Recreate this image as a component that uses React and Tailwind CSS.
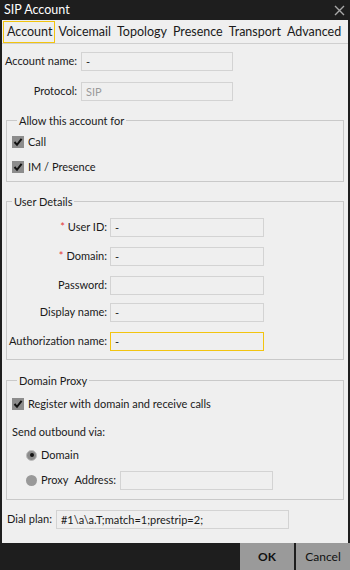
import React from "react";

const F = "font-['Lato',sans-serif]";

function Input({ value = "", w, muted, focused }) {
  return (
    <div
      className={`h-[19px] ${w} border ${focused ? "border-[#f2c40f]" : "border-[#d3d3d3]"} bg-[#efefef] flex items-center px-[4px] text-[11px] ${muted ? "text-[#9a9a9a]" : "text-[#1a1a1a]"} leading-none`}
    >
      {value}
    </div>
  );
}

function Check({ label }) {
  return (
    <div className="flex items-center h-[16px]">
      <div className="w-[12px] h-[12px] bg-[#8c8c8c] flex items-center justify-center">
        <svg width="10" height="10" viewBox="0 0 10 10">
          <path d="M1.5 5 L4 7.8 L8.6 1.8" fill="none" stroke="#111" strokeWidth="2" />
        </svg>
      </div>
      <span className="ml-[4px] text-[11px] text-[#1a1a1a]">{label}</span>
    </div>
  );
}

function Radio({ checked }) {
  return (
    <div className={`w-[11px] h-[11px] rounded-full flex items-center justify-center ${checked ? "bg-[#8c8c8c] border border-[#bdbdbd]" : "bg-[#999999]"}`}>
      {checked && <div className="w-[4px] h-[4px] rounded-full bg-[#111]" />}
    </div>
  );
}

function Row({ label, req, value, focused }) {
  return (
    <div className="flex items-center">
      <div className="w-[103px] text-right text-[11px] text-[#1a1a1a] pr-[3px]">
        {req && <span className="text-[#e53935] mr-[3px]">*</span>}
        {label}
      </div>
      <Input w="w-[154px]" value={value} focused={focused} />
    </div>
  );
}

function Tab({ children, active }) {
  return (
    <div className={`h-[22px] px-[2px] border ${active ? "border-[#f2c40f] pl-[3px]" : "border-transparent"} flex items-center`}>
      {children}
    </div>
  );
}

export default function App() {
  return (
    <div className={`${F} w-[350px] h-[570px] flex flex-col bg-[#1e1e1e] overflow-hidden`}>
      <div className="h-[20px] flex items-center justify-between pl-[4px] pr-[5px]">
        <span className="text-white text-[12.5px] leading-none">SIP Account</span>
        <svg width="11" height="11" viewBox="0 0 11 11">
          <path d="M1 1 L10 10 M10 1 L1 10" stroke="#a8a8a8" strokeWidth="1.4" />
        </svg>
      </div>
      <div className="flex-1 bg-[#efefef] mx-[2px] flex flex-col">
        <div className="h-[24px] pt-[1px] pl-[1px] flex border-b border-[#cfcfcf] text-[12.5px] text-[#1a1a1a]">
          <Tab active>Account</Tab>
          <Tab>Voicemail</Tab>
          <Tab>Topology</Tab>
          <Tab>Presence</Tab>
          <Tab>Transport</Tab>
          <Tab>Advanced</Tab>
        </div>

        <div className="mt-[8px] flex items-center text-[11px] text-[#1a1a1a]">
          <div className="w-[75px] text-right">Account name:</div>
          <div className="ml-[4px]"><Input w="w-[152px]" value="-" /></div>
        </div>
        <div className="mt-[11px] flex items-center text-[11px] text-[#1a1a1a]">
          <div className="w-[75px] text-right">Protocol:</div>
          <div className="ml-[4px]"><Input w="w-[152px]" value="SIP" muted /></div>
        </div>

        <fieldset className="mt-[12px] mx-[4px] border border-[#c9c9c9] pl-[5px] pb-[6px]">
          <legend className="ml-[5px] px-[2px] text-[11px] text-[#1a1a1a] leading-[15px]">Allow this account for</legend>
          <div className="mt-[6px] flex flex-col gap-[9px]">
            <Check label="Call" />
            <Check label="IM / Presence" />
          </div>
        </fieldset>

        <fieldset className="mt-[12px] mx-[4px] border border-[#c9c9c9] pb-[8px]">
          <legend className="ml-[5px] px-[2px] text-[11px] text-[#1a1a1a] leading-[15px]">User Details</legend>
          <div className="mt-[9px] flex flex-col">
            <Row label="User ID:" req value="-" />
            <div className="mt-[10px]"><Row label="Domain:" req value="-" /></div>
            <div className="mt-[10px]"><Row label="Password:" value="" /></div>
            <div className="mt-[8px]"><Row label="Display name:" value="-" /></div>
            <div className="mt-[10px]"><Row label="Authorization name:" value="-" focused /></div>
          </div>
        </fieldset>

        <fieldset className="mt-[13px] mx-[4px] border border-[#c9c9c9] pl-[5px] pb-[9px] text-[11px] text-[#1a1a1a]">
          <legend className="ml-[5px] px-[2px] leading-[15px]">Domain Proxy</legend>
          <div className="mt-[8px]"><Check label="Register with domain and receive calls" /></div>
          <div className="mt-[12px] h-[16px] flex items-center">Send outbound via:</div>
          <div className="mt-[7px] h-[16px] pl-[14px] flex items-center">
            <Radio checked />
            <span className="ml-[4px]">Domain</span>
          </div>
          <div className="mt-[8px] pl-[14px] flex items-center">
            <Radio />
            <span className="ml-[4px]">Proxy</span>
            <span className="ml-[6px]">Address:</span>
            <div className="ml-[4px]"><Input w="w-[153px]" value="" /></div>
          </div>
        </fieldset>

        <div className="mt-[10px] flex items-center pl-[5px] text-[11px] text-[#1a1a1a]">
          <span>Dial plan:</span>
          <div className="ml-[4px]"><Input w="w-[233px]" value="#1\a\a.T;match=1;prestrip=2;" /></div>
        </div>
      </div>
      <div className="h-[27px] flex justify-end">
        <div className="w-[54px] bg-[#9a9a9a] flex items-center justify-center text-[12px] font-bold text-[#111]">OK</div>
        <div className="w-[54px] ml-[2px] bg-[#9a9a9a] flex items-center justify-center text-[12px] text-[#111]">Cancel</div>
      </div>
    </div>
  );
}
